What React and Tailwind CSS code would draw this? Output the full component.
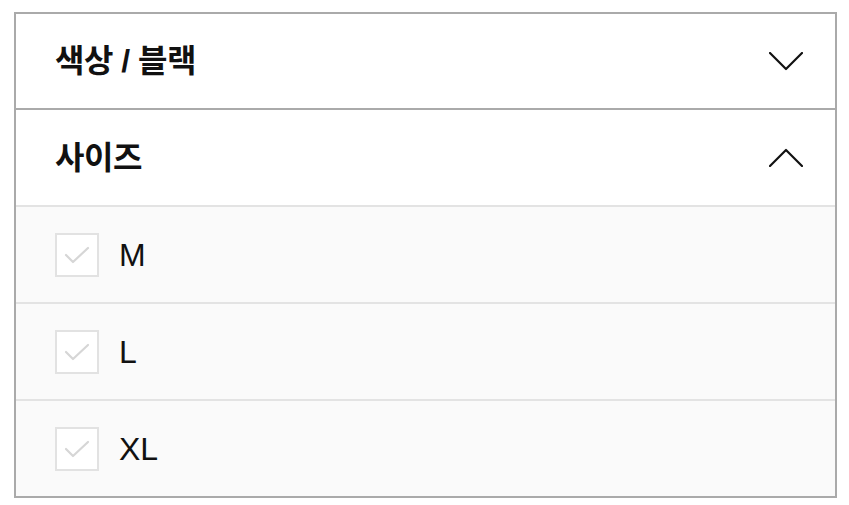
import React from 'react';

const font = { fontFamily: '"Liberation Sans", "Noto Sans CJK KR", sans-serif' };

function Chevron({ up }) {
  return (
    <svg width="34" height="19" viewBox="0 0 34 19" fill="none" className="shrink-0">
      <path
        d={up ? 'M1 18L17 2L33 18' : 'M1 1L17 17L33 1'}
        stroke="#111"
        strokeWidth="2.2"
        strokeLinecap="round"
        strokeLinejoin="round"
      />
    </svg>
  );
}

function Header({ title, up, last }) {
  return (
    <div className={`flex items-center justify-between pl-[39px] pr-[32px] bg-white ${last ? 'h-[97px] border-b-2 border-[#e3e3e3]' : 'h-[96px] border-b-2 border-[#aaaaaa]'}`}>
      <span className="text-[32px] font-bold text-[#111] tracking-[-0.5px]" style={font}>{title}</span>
      <Chevron up={up} />
    </div>
  );
}

function SizeRow({ label, last }) {
  return (
    <div className={`flex items-center pl-[39px] bg-[#fafafa] ${last ? 'h-[95px]' : 'h-[97px] border-b-2 border-[#e3e3e3]'}`}>
      <div className="w-[44px] h-[44px] border-2 border-[#e2e2e2] bg-white flex items-center justify-center shrink-0">
        <svg width="26" height="20" viewBox="0 0 26 20" fill="none">
          <path d="M2 10L9 17L24 3" stroke="#d6d6d6" strokeWidth="2.2" strokeLinecap="round" strokeLinejoin="round" />
        </svg>
      </div>
      <span className="ml-[20px] text-[32px] text-[#111]" style={font}>{label}</span>
    </div>
  );
}

export default function App() {
  return (
    <div className="w-[849px] h-[505px] bg-white pt-[12px] pl-[14px]">
      <div className="w-[823px] border-2 border-[#aaaaaa] bg-white">
        <Header title="색상 / 블랙" />
        <Header title="사이즈" up last />
        <SizeRow label="M" />
        <SizeRow label="L" />
        <SizeRow label="XL" last />
      </div>
    </div>
  );
}
